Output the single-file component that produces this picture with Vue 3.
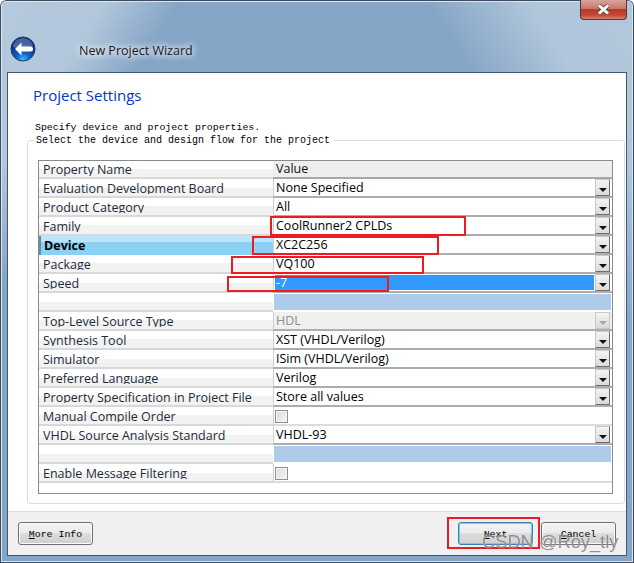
<template>
  <div class="window">
    <header class="titlebar">
      <svg class="back-btn" width="26" height="26" viewBox="0 0 26 26">
        <defs>
          <radialGradient id="orb" cx="50%" cy="95%" r="75%">
            <stop offset="0" stop-color="#35c4f5" />
            <stop offset="0.4" stop-color="#0f5fc8" />
            <stop offset="1" stop-color="#0a2c78" />
          </radialGradient>
        </defs>
        <circle cx="13" cy="13" r="12" fill="url(#orb)" stroke="#1d3a66" />
        <path d="M3 11a10 9 0 0 1 20 0c-6 2.500-14 2.500-20 0z" fill="#fff" opacity="0.25" />
        <path d="M5 13l6.500-6.500v4h9a2.500 2.500 0 0 1 0 5h-9v4z" fill="#fff" />
      </svg>
      <span class="wizard-title">New Project Wizard</span>
      <div class="close-btn">
        <svg width="15" height="11" viewBox="0 0 15 11">
          <path d="M3 1.500l9 8M12 1.500l-9 8" stroke="#5a4a4a" stroke-width="4.500" fill="none" />
          <path d="M3 1.500l9 8M12 1.500l-9 8" stroke="#fff" stroke-width="3" fill="none" />
        </svg>
      </div>
    </header>

    <div class="content">
      <main class="page">
        <h1>Project Settings</h1>
        <p class="mono intro">Specify device and project properties.</p>
        <fieldset class="group">
          <legend class="mono">Select the device and design flow for the project</legend>

          <div class="grid">
            <div class="row head">
              <div class="name"><span>Property Name</span></div>
              <div class="value-head">Value</div>
            </div>
            <div v-for="(row, i) in rows" :key="i" class="row">
              <div class="name" :class="{ current: row.current }"><span>{{ row.name }}</span></div>
              <div class="value" :class="row.kind">
                <template v-if="row.kind === 'check'"><i class="checkbox"></i></template>
                <template v-else-if="row.kind !== 'fill'">
                  <span class="text">{{ row.value }}</span>
                  <b class="drop"><svg width="8" height="4" viewBox="0 0 8 4"><path d="M0 0h8L4 4z" /></svg></b>
                </template>
              </div>
            </div>
          </div>
        </fieldset>
      </main>

      <footer class="footer">
        <button class="btn mono"><u>M</u>ore Info</button>
        <div class="right-btns">
          <button class="btn mono primary"><u>N</u>ext</button>
          <button class="btn mono"><u>C</u>ancel</button>
        </div>
      </footer>
    </div>

    <!-- red annotations drawn over the screenshot -->
    <div class="mark m-family"></div>
    <div class="mark m-device"></div>
    <div class="mark m-package"></div>
    <div class="mark m-speed"></div>
    <div class="mark m-next"></div>
    <div class="watermark">CSDN @Roy_tly</div>
  </div>
</template>

<script setup>
const rows = [
  { name: 'Evaluation Development Board', value: 'None Specified', kind: 'combo' },
  { name: 'Product Category', value: 'All', kind: 'combo' },
  { name: 'Family', value: 'CoolRunner2 CPLDs', kind: 'combo' },
  { name: 'Device', value: 'XC2C256', kind: 'combo', current: true },
  { name: 'Package', value: 'VQ100', kind: 'combo' },
  { name: 'Speed', value: '-7', kind: 'combo selected' },
  { name: '', kind: 'fill' },
  { name: 'Top-Level Source Type', value: 'HDL', kind: 'combo disabled' },
  { name: 'Synthesis Tool', value: 'XST (VHDL/Verilog)', kind: 'combo' },
  { name: 'Simulator', value: 'ISim (VHDL/Verilog)', kind: 'combo' },
  { name: 'Preferred Language', value: 'Verilog', kind: 'combo' },
  { name: 'Property Specification in Project File', value: 'Store all values', kind: 'combo' },
  { name: 'Manual Compile Order', kind: 'check' },
  { name: 'VHDL Source Analysis Standard', value: 'VHDL-93', kind: 'combo' },
  { name: '', kind: 'fill' },
  { name: 'Enable Message Filtering', kind: 'check' }
]
</script>

<style>
html, body { margin: 0; background: #fff; }
</style>

<style scoped>
.window {
  position: relative;
  box-sizing: border-box;
  width: 634px;
  height: 563px;
  padding: 0 7px 7px;
  overflow: hidden;
  display: flex;
  flex-direction: column;
  border-radius: 6px 6px 0 0;
  background:
    linear-gradient(122deg, #b5c9dc 0, #b2c7dc 90px, #88a7c7 150px, transparent 155px),
    linear-gradient(238deg, #b3c7da 0, #b0c6da 90px, #87a6c7 175px, transparent 180px),
    #85a5c7;
  font-family: "Open Sans", "Noto Sans", sans-serif;
  color: #111;
  box-shadow: inset 0 0 0 1px #3c4c60, inset 0 0 0 2px #dbe5ef;
}

.titlebar {
  position: relative;
  flex: none;
  height: 72px;
  margin: 0 -7px;
  padding: 36px 0 0 10px;
  box-sizing: border-box;
  display: flex;
  align-items: flex-start;
}
.back-btn { flex: none; }
.wizard-title {
  margin: 7px 0 0 43px;
  font-size: 12.5px;
  line-height: 16px;
  color: #1a1a1a;
  text-shadow: 0 0 6px #e8eff6, 0 0 6px #e8eff6, 0 0 10px #dfe9f3;
}
.close-btn {
  position: absolute;
  top: 0;
  right: 7px;
  width: 47px;
  height: 20px;
  box-sizing: border-box;
  border: 1px solid #4b3a3c;
  border-top: 0;
  border-radius: 0 0 4px 4px;
  background: linear-gradient(#d9a39c 0, #c9766c 45%, #b63a26 50%, #c54a36 80%, #d9816f 100%);
  display: flex;
  align-items: center;
  justify-content: center;
}

.content {
  flex: 1;
  min-height: 0;
  display: flex;
  flex-direction: column;
  border: 1px solid #44566a;
  background: #f0f0f0;
}
.page {
  flex: 1;
  min-height: 0;
  background: #fff;
  border-bottom: 1px solid #dfdfdf;
  padding: 11px 0 0 19px;
  box-sizing: border-box;
}
h1 {
  margin: 0 0 0 6px;
  font-size: 15px;
  line-height: 22px;
  font-weight: 400;
  color: #0636c4;
}
.mono {
  font-family: "Liberation Mono", "DejaVu Sans Mono", monospace;
  font-size: 9.9px;
  color: #000;
}
.intro {
  margin: 15px 0 0 8px;
  line-height: 13px;
}
.group {
  box-sizing: border-box;
  width: 598px;
  margin: 0;
  padding: 13px 11px 0 10px;
  height: 370px;
  border: 1px solid #d5dfe7;
  border-radius: 3px;
}
.group legend {
  padding: 0 4px 0 2px;
  margin-left: -4px;
  font-size: 10px;
  line-height: 13px;
}

.grid {
  width: 575px;
  height: 334px;
  box-sizing: border-box;
  border: 1px solid #8a8a8a;
  background: #fff;
  font-size: 12.5px;
}
.row {
  display: grid;
  grid-template-columns: 234px 1fr;
  height: 19px;
  box-sizing: border-box;
}
.row.head { height: 18px; background: #f0f0f0; }
.name {
  box-sizing: border-box;
  padding: 1px 0 0 4px;
  border-bottom: 2px solid #d8d8d8;
  background: linear-gradient(#fff 50%, #f2f2f2 50%);
  overflow: hidden;
  white-space: nowrap;
}
.name span {
  display: block;
  height: 14px;
  line-height: 17px;
  overflow: hidden;
  color: #1d2b3a;
}
.head .name span { margin-top: -1px; height: 15px; }
.name.current {
  background: linear-gradient(#bde5fa 30%, #8bd0f5 30%);
  border-left: 2px solid #5b8fb8;
  padding-left: 3px;
  border-bottom: 0;
}
.name.current span { font-weight: 700; color: #000; }
.value-head {
  padding-left: 3px;
  line-height: 15px;
  background: #eee;
  border-bottom: 2px solid #a8a8a8;
}
.value {
  position: relative;
  box-sizing: border-box;
  border-left: 1px solid #d0d0d0;
  border-bottom: 2px solid #adadad;
  display: flex;
  overflow: hidden;
}
.value .text {
  flex: 1;
  padding-left: 2px;
  line-height: 17px;
  color: #000;
}
.value.selected .text {
  background: #3399ff;
  color: #fff;
  margin: 1px 0 1px 1px;
  padding-left: 1px;
  line-height: 15px;
}
.value.disabled { background: #f0f0f0; }
.value.disabled .text { color: #8d8d8d; }
.value.fill {
  background: #aecbeb;
  border: 1px solid #fff;
  border-bottom: 2px solid #fff;
}
.value.check {
  border-bottom-color: #dcdcdc;
  padding: 3px 0 0 1px;
}
.checkbox {
  display: block;
  width: 13px;
  height: 13px;
  box-sizing: border-box;
  border: 1px solid #8e8f8f;
  background: linear-gradient(135deg, #dcdcdc, #f4f4f4);
  box-shadow: inset 0 0 0 1px #f4f4f4;
}
.drop {
  flex: none;
  width: 15px;
  margin: 0 2px 0 1px;
  padding-top: 5px;
  box-sizing: border-box;
  border: 1px solid #6e6e6e;
  border-top-color: #c8c8c8;
  border-left-color: #c8c8c8;
  background: linear-gradient(#f4f4f4, #dadada);
  display: flex;
  align-items: center;
  justify-content: center;
}
.drop path { fill: #111; }
.value.disabled .drop path { fill: #a6a6a6; }
.value.disabled .drop { border-color: #c8c8c8; }

.footer {
  flex: none;
  height: 43px;
  box-sizing: border-box;
  padding: 10px 10px 0 10px;
  display: flex;
  justify-content: space-between;
}
.right-btns { display: flex; gap: 8px; }
.btn {
  width: 75px;
  height: 23px;
  padding: 2px 0 0;
  box-sizing: border-box;
  border: 1px solid #707070;
  border-radius: 3px;
  background: linear-gradient(#f3f3f3 0, #ebebeb 48%, #dddddd 50%, #cfcfcf 100%);
  box-shadow: inset 0 0 0 1px #fbfbfb;
}
.btn.primary {
  border-color: #3c7fb1;
  box-shadow: inset 0 0 0 1px #6fcdf0;
}

.mark {
  position: absolute;
  box-sizing: border-box;
  border: 2px solid #ed1c24;
}
.m-family { left: 270px; top: 216px; width: 196px; height: 20px; }
.m-device { left: 252px; top: 236px; width: 187px; height: 19px; }
.m-package { left: 231px; top: 256px; width: 193px; height: 18px; }
.m-speed { left: 227px; top: 276px; width: 162px; height: 16px; }
.m-next { left: 447px; top: 517px; width: 93px; height: 32px; }

.watermark {
  position: absolute;
  left: 482px;
  top: 531px;
  font: 18.3px/22px "Liberation Sans", sans-serif;
  color: rgba(90, 90, 90, 0.68);
  text-shadow: 0 0 1px rgba(255, 255, 255, 0.8);
  white-space: nowrap;
}
</style>
